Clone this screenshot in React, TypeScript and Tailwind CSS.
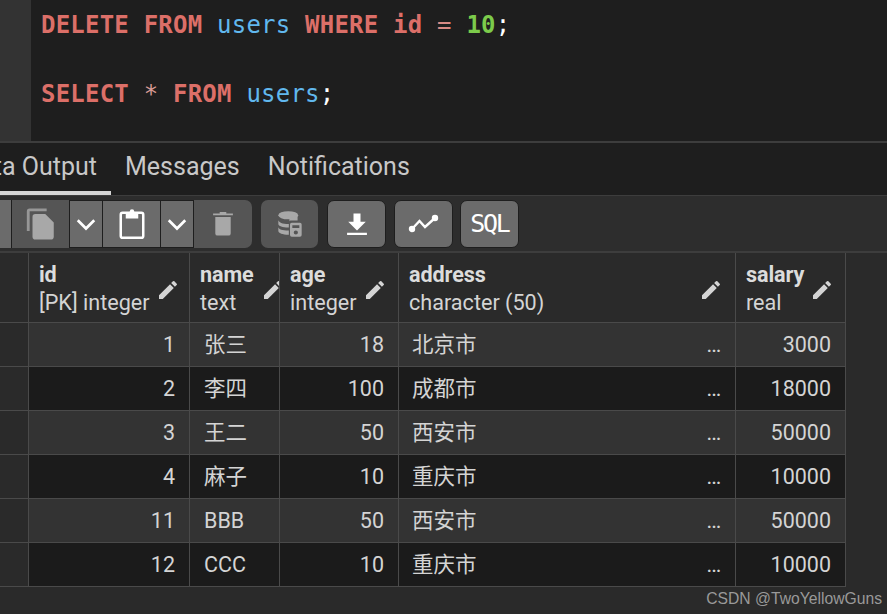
const cols = 'grid grid-cols-[29px_161px_90px_119px_337px_110px] w-[846px]';
const cjk = "font-['Roboto','Noto_Sans_CJK_SC',sans-serif]";

const headers = [
  { name: 'id', type: '[PK] integer', pad: 'pr-[9px]', icon: '' },
  { name: 'name', type: 'text', pad: 'pr-0', icon: '-mr-[6px]' },
  { name: 'age', type: 'integer', pad: 'pr-[11px]', icon: '' },
  { name: 'address', type: 'character (50)', pad: 'pr-[12px]', icon: '' },
  { name: 'salary', type: 'real', pad: 'pr-[11px]', icon: '' },
];

const rows = [
  { id: 1, name: '张三', age: 18, address: '北京市', salary: 3000 },
  { id: 2, name: '李四', age: 100, address: '成都市', salary: 18000 },
  { id: 3, name: '王二', age: 50, address: '西安市', salary: 50000 },
  { id: 4, name: '麻子', age: 10, address: '重庆市', salary: 10000 },
  { id: 11, name: 'BBB', age: 50, address: '西安市', salary: 50000 },
  { id: 12, name: 'CCC', age: 10, address: '重庆市', salary: 10000 },
];

function EditIcon({ className }: { className: string }) {
  return (
    <svg width="24" height="24" viewBox="0 0 24 24" className={`shrink-0 mt-[1px] text-[#d4d4d4] ${className}`} fill="currentColor">
      <path d="M3 17.25V21h3.75L17.81 9.94l-3.75-3.75L3 17.25zM20.71 7.04a1 1 0 0 0 0-1.41l-2.34-2.34a1 1 0 0 0-1.41 0l-1.83 1.83 3.75 3.75 1.83-1.83z" />
    </svg>
  );
}

function Chevron() {
  return (
    <svg width="24" height="24" viewBox="4 4 16 16" fill="none" stroke="#ffffff" strokeWidth="1.8">
      <path d="M6.500 9.500l5.500 5.500 5.500-5.500" />
    </svg>
  );
}

function ToolBtn({ children, className }: { children?: React.ReactNode; className: string }) {
  return <div className={`h-[48px] flex items-center justify-center ${className}`}>{children}</div>;
}

export default function App() {
  return (
    <div className={`w-[887px] h-[614px] overflow-hidden bg-[#2a2a2a] text-[#d4d4d4] ${cjk}`}>
      {/* editor */}
      <div className="h-[141px] flex bg-[#1e1e1e]">
        <div className="w-[31px] bg-[#333333]" />
        <div className="pl-[10px] pt-[8px] font-['DejaVu_Sans_Mono',monospace] text-[24px] leading-[34px] whitespace-pre tracking-[0.22px]">
          <div>
            <span className="text-[#dc6f68] font-bold">DELETE FROM</span> <span className="text-[#61b8ee]">users</span>{' '}
            <span className="text-[#dc6f68] font-bold">WHERE id</span> <span className="text-[#d88a85]">=</span>{' '}
            <span className="text-[#7ccb4b] font-bold">10</span>
            <span className="text-white">;</span>
          </div>
          <div className="h-[35px]" />
          <div>
            <span className="text-[#dc6f68] font-bold">SELECT</span> <span className="text-[#d89a95]">*</span>{' '}
            <span className="text-[#dc6f68] font-bold">FROM</span> <span className="text-[#61b8ee]">users</span>
            <span className="text-white">;</span>
          </div>
        </div>
      </div>

      {/* tabs */}
      <div className="h-[55px] border-t-[2px] border-b border-[#3d3d3d] bg-[#1e1e1e] flex text-[25px] text-[#c8c8c8] overflow-hidden">
        <div className="w-[111px] h-full shrink-0 overflow-hidden flex justify-end items-center pr-[14px] pb-[1px] border-b-[4px] border-[#d6d6d6]">
          <span className="whitespace-nowrap">Data Output</span>
        </div>
        <div className="h-full flex items-center pl-[14px] pr-[15px] pb-[5px]">Messages</div>
        <div className="h-full flex items-center px-[13px] pb-[5px]">Notifications</div>
      </div>

      {/* toolbar */}
      <div className="h-[57px] bg-[#2d2d2d] border-b-[2px] border-[#3d3d3d] flex items-center">
        <ToolBtn className="w-[12px] bg-[#6b6b6b] border-r border-[#1e1e1e]" />
        <ToolBtn className="w-[57px] bg-[#555555]">
          <svg width="34" height="34" viewBox="0 0 24 24" fill="#a8a8a8">
            <path d="M16 1H4a2 2 0 0 0-2 2v14h2V3h12V1z" opacity="0.8" />
            <path d="M15 5H8a2 2 0 0 0-2 2v14a2 2 0 0 0 2 2h11a2 2 0 0 0 2-2V11l-6-6z" />
          </svg>
        </ToolBtn>
        <ToolBtn className="w-[34px] bg-[#6b6b6b] border border-[#1e1e1e]">
          <Chevron />
        </ToolBtn>
        <ToolBtn className="w-[57px] bg-[#6b6b6b] border-y border-[#1e1e1e]">
          <svg width="30" height="34" viewBox="0 0 24 26" fill="none" stroke="#ffffff" strokeWidth="2">
            <rect x="3" y="4" width="18" height="20" rx="1.500" />
            <path d="M8 5h8v2.500H8z" fill="#ffffff" />
            <circle cx="12" cy="3" r="1.800" fill="#ffffff" stroke="none" />
          </svg>
        </ToolBtn>
        <ToolBtn className="w-[34px] bg-[#6b6b6b] border border-[#1e1e1e]">
          <Chevron />
        </ToolBtn>
        <ToolBtn className="w-[58px] bg-[#555555] rounded-r-[7px]">
          <svg width="22" height="27" viewBox="0 0 20 24" fill="#a8a8a8">
            <path d="M1 3h18v1.500H1zM7 1.500h6V3H7zM3 6h14v15a2 2 0 0 1-2 2H5a2 2 0 0 1-2-2z" />
          </svg>
        </ToolBtn>
        <ToolBtn className="w-[57px] ml-[9px] bg-[#555555] rounded-[7px]">
          <svg width="28" height="28" viewBox="0 0 24 24" fill="#a8a8a8">
            <ellipse cx="10.500" cy="4.500" rx="8.500" ry="3.500" />
            <path d="M2 8.500V12c0 1.700 3.800 3 8.500 3h.5v-3h-.5C5.800 12 2 10.500 2 8.500zM2 14.500V18c0 1.800 3.800 3.200 8.500 3.200h.5V17.500h-.5C5.800 17.500 2 16.500 2 14.500zM11.500 6.800c3-.3 5.500-1 7-2.300v4.500h-5.500c-1 0-1.500.5-1.500 1z" />
            <path d="M13.500 11h7a1.500 1.500 0 0 1 1.500 1.500v9a1.500 1.500 0 0 1-1.500 1.500h-7a1.500 1.500 0 0 1-1.500-1.500v-9a1.500 1.500 0 0 1 1.500-1.500zM14 13v2.500h6V13zM17 17.500a1.800 1.800 0 1 0 0 3.600 1.800 1.800 0 0 0 0-3.600z" fillRule="evenodd" />
          </svg>
        </ToolBtn>
        <ToolBtn className="w-[59px] ml-[9px] bg-[#6b6b6b] rounded-[7px] border border-[#1e1e1e]">
          <svg width="28" height="28" viewBox="0 0 24 24" fill="#ffffff">
            <path d="M9 3h6v7h4.500L12 17.500 4.500 10H9zM3.500 19.500h17v2h-17z" />
          </svg>
        </ToolBtn>
        <ToolBtn className="w-[59px] ml-[8px] bg-[#6b6b6b] rounded-[7px] border border-[#1e1e1e]">
          <svg width="32" height="32" viewBox="0 0 32 32" fill="none" stroke="#ffffff" strokeWidth="2.400">
            <path d="M4 21l7.500-8 5.500 6 10-9" />
            <circle cx="4" cy="21" r="2" fill="#ffffff" />
            <circle cx="27" cy="10" r="2" fill="#ffffff" />
          </svg>
        </ToolBtn>
        <ToolBtn className="w-[59px] ml-[7px] bg-[#6b6b6b] rounded-[7px] border border-[#1e1e1e]">
          <span className="font-['DejaVu_Sans_Mono',monospace] text-[25px] leading-none text-white tracking-[-2.300px]">SQL</span>
        </ToolBtn>
      </div>

      {/* table */}
      <div className={`${cols} h-[70px] bg-[#2a2a2a] border-b border-[#4a4a4a] text-[21.600px] leading-[28px]`}>
        <div className="border-r border-[#4a4a4a]" />
        {headers.map((h) => (
          <div key={h.name} className={`border-r border-[#4a4a4a] pl-[10px] pt-[3px] ${h.pad} flex items-center justify-between min-w-0 overflow-hidden`}>
            <div className="whitespace-nowrap">
              <div className="font-bold text-[#dcdcdc] tracking-[-0.1px]">{h.name}</div>
              <div>{h.type}</div>
            </div>
            <EditIcon className={h.icon} />
          </div>
        ))}
      </div>
      {rows.map((r, i) => (
        <div key={r.id} className={`${cols} h-[44px] border-b border-[#4a4a4a] text-[21.500px] ${i % 2 === 0 ? 'bg-[#333333]' : 'bg-[#1b1b1b]'}`}>
          <div className="border-r border-[#4a4a4a] bg-[#2a2a2a]" />
          <div className="border-r border-[#4a4a4a] flex items-center justify-end pr-[14px] pt-[1px]">{r.id}</div>
          <div className="border-r border-[#4a4a4a] flex items-center pl-[14px] pt-[1px]">{r.name}</div>
          <div className="border-r border-[#4a4a4a] flex items-center justify-end pr-[14px] pt-[1px]">{r.age}</div>
          <div className="border-r border-[#4a4a4a] flex items-center justify-between pl-[13px] pr-[14px] pt-[1px]">
            <span>{r.address}</span>
            <span className="text-[16px] font-bold pt-[4px]">...</span>
          </div>
          <div className="border-r border-[#4a4a4a] flex items-center justify-end pr-[14px] pt-[1px]">{r.salary}</div>
        </div>
      ))}
      <div className="flex justify-end pr-[5px] pt-[3px] font-['Liberation_Sans',sans-serif] text-[15.700px] leading-[18px] text-[#999999]">
        CSDN @TwoYellowGuns
      </div>
    </div>
  );
}
